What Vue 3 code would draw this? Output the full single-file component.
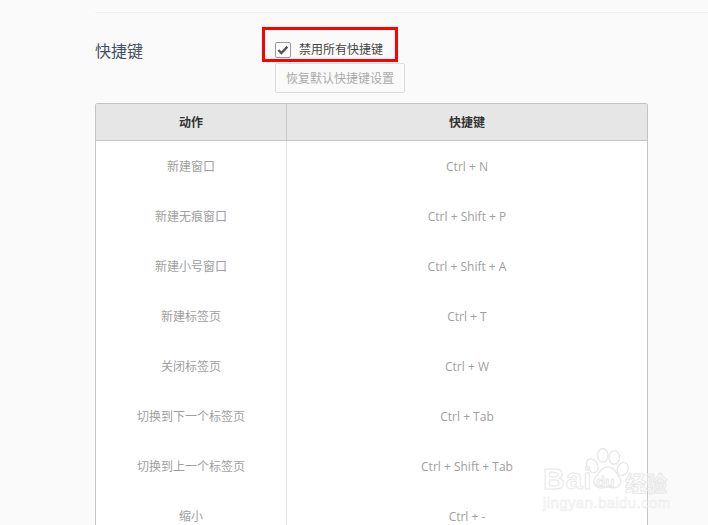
<script setup>
const rows = [
  ['新建窗口', 'Ctrl + N'],
  ['新建无痕窗口', 'Ctrl + Shift + P'],
  ['新建小号窗口', 'Ctrl + Shift + A'],
  ['新建标签页', 'Ctrl + T'],
  ['关闭标签页', 'Ctrl + W'],
  ['切换到下一个标签页', 'Ctrl + Tab'],
  ['切换到上一个标签页', 'Ctrl + Shift + Tab'],
  ['缩小', 'Ctrl + -'],
]
</script>

<template>
  <div class="page">
    <div class="content">
      <section class="settings">
        <h2 class="title">快捷键</h2>
        <div class="controls">
          <label class="check">
            <span class="box">
              <svg width="12" height="10" viewBox="0 0 12 10"><path d="M1.4 5 4.4 8 10.4 1.6" fill="none" stroke="#555" stroke-width="2.4"/></svg>
            </span>
            <span class="check-text">禁用所有快捷键</span>
          </label>
          <button class="reset">恢复默认快捷键设置</button>
        </div>
      </section>
      <div class="table">
        <div class="row head">
          <div class="c1">动作</div>
          <div class="c2">快捷键</div>
        </div>
        <div v-for="r in rows" :key="r[0]" class="row">
          <div class="c1">{{ r[0] }}</div>
          <div class="c2">{{ r[1] }}</div>
        </div>
      </div>
    </div>
    <div class="redbox"></div>
    <div class="mark">
      <svg class="paw" width="44" height="44" viewBox="0 0 42 42" fill="none" stroke="#e8e8e8" stroke-width="1.3">
        <ellipse cx="6" cy="17" rx="5" ry="7" transform="rotate(-30 6 17)"/>
        <ellipse cx="16" cy="7" rx="5" ry="6.5"/>
        <ellipse cx="27" cy="9" rx="5" ry="6.5"/>
        <ellipse cx="35" cy="20" rx="5" ry="6.5" transform="rotate(25 35 20)"/>
        <path d="M21 18c6 0 8 6 11 10 3 5-1 10-6 10-2 0-3-1-5-1s-4 2-8 1c-5-1-7-6-4-10 3-4 6-10 12-10z"/>
      </svg>
      <span class="bai">Bai</span><span class="du">du</span><span class="jy">经验</span>
      <span class="url">jingyan.baidu.com</span>
    </div>
  </div>
</template>

<style>
html, body { margin: 0; overflow: hidden; background: #fafafa; }
</style>

<style scoped>
.page {
  position: relative;
  width: 708px;
  height: 525px;
  overflow: hidden;
  background: #fafafa;
  font-family: "Open Sans", "Noto Sans CJK SC", sans-serif;
}
.content {
  margin-left: 95px;
  padding-top: 12px;
}
.settings {
  display: flex;
  height: 91px;
  border-top: 1px solid #efefef;
  box-sizing: border-box;
}
.title {
  margin: 27px 0 0;
  width: 180px;
  font-size: 16px;
  line-height: 22px;
  font-weight: 400;
  color: #44525f;
}
.controls {
  padding-top: 27px;
  display: flex;
  flex-direction: column;
  align-items: flex-start;
}
.check {
  display: flex;
  align-items: center;
  height: 18px;
  margin-bottom: 5px;
}
.box {
  width: 14px;
  height: 14px;
  margin-top: 1px;
  border: 1px solid #999;
  border-radius: 2px;
  background: #fff;
  display: flex;
  align-items: center;
  justify-content: center;
}
.check-text {
  margin-left: 8px;
  font-size: 12px;
  color: #444;
}
.reset {
  width: 130px;
  height: 30px;
  padding: 0;
  border: 1px solid #ddd;
  border-radius: 2px;
  background: #fafafa;
  color: #aaa;
  font: inherit;
  font-size: 12px;
}
.table {
  width: 553px;
  box-sizing: border-box;
  border: 1px solid #c4c4c4;
  border-bottom: 0;
  border-radius: 3px 3px 0 0;
  background: #fff;
}
.row {
  display: grid;
  grid-template-columns: 191px 1fr;
  grid-template-rows: 50px;
  height: 50px;
  font-size: 12px;
  color: #a0a0a0;
  text-align: center;
}
.row > div {
  box-sizing: border-box;
  padding-top: 1px;
  line-height: 50px;
}
.c1 {
  border-right: 1px solid #e6e6e6;
}
.head {
  grid-template-rows: 36px;
  height: 37px;
  background: #e6e6e6;
  border-bottom: 1px solid #c4c4c4;
  border-radius: 2px 2px 0 0;
  box-sizing: border-box;
  font-weight: 700;
}
.head > div {
  padding-top: 1px;
  line-height: 36px;
  color: #333;
}
.head .c1 {
  border-right-color: #c8c8c8;
}
.redbox {
  position: absolute;
  left: 262px;
  top: 27px;
  width: 130px;
  height: 29px;
  border: 3px solid #f00;
  pointer-events: none;
}
.mark {
  position: absolute;
  left: 543px;
  top: 448px;
  width: 130px;
  height: 68px;
  color: transparent;
  font-family: "Liberation Sans", "Noto Sans CJK SC", sans-serif;
}
.paw { position: absolute; left: 43px; top: 0; }
.bai, .du, .jy {
  position: absolute;
  -webkit-text-stroke: 1px #e8e8e8;
  font-weight: 700;
}
.bai { left: 0; top: 14px; font-size: 30px; letter-spacing: 1px; }
.du { left: 53px; top: 25px; font-size: 15px; }
.jy { left: 82px; top: 19px; font-size: 21px; }
.url {
  position: absolute;
  left: 0;
  top: 46px;
  font-size: 15px;
  letter-spacing: 0.4px;
  -webkit-text-stroke: 0.6px #ececec;
  white-space: nowrap;
}
</style>
